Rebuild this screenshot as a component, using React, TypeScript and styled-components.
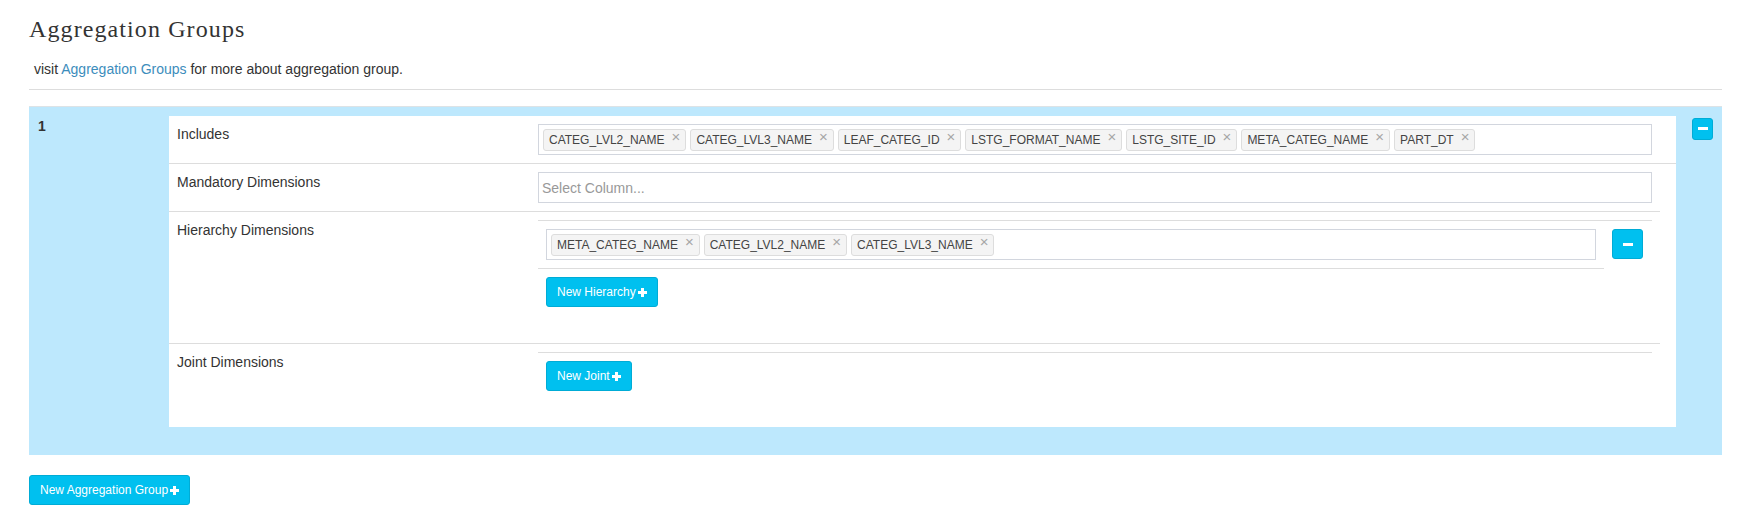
import React from 'react';
import styled, { createGlobalStyle } from 'styled-components';

const GlobalStyle = createGlobalStyle`
  html, body { margin: 0; padding: 0; background: #fff; }
  body {
    font-family: "Liberation Sans", Arial, sans-serif;
    font-size: 14px;
    line-height: 20px;
    color: #333;
  }
  * { box-sizing: border-box; }
`;

const Page = styled.div`
  padding: 0 21px 40px 29px;
`;

const Title = styled.h3`
  margin: 16px 0 0;
  font-family: "Liberation Serif", "Times New Roman", serif;
  font-size: 24px;
  letter-spacing: 1.1px;
  line-height: 26px;
  font-weight: normal;
  color: #333;
`;

const Intro = styled.p`
  margin: 17px 0 0;
  padding-left: 5px;
  font-size: 14px;
  line-height: 20px;
`;

const DocLink = styled.a`
  color: #3c8dbc;
  text-decoration: none;
`;

const Divider = styled.hr`
  margin: 10px 0 0;
  height: 0;
  border: 0;
  border-top: 1px solid #ddd;
`;

const GroupPanel = styled.div`
  margin-top: 16px;
  border-top: 1px solid #dde3e6;
  background: #bde8fd;
  padding: 9px 0 28px;
  display: grid;
  grid-template-columns: 140px 1fr 46px;
  align-items: start;
`;

const GroupIndex = styled.div`
  padding-left: 9px;
  font-weight: bold;
  line-height: 20px;
  color: #333;
`;

const Sheet = styled.div`
  background: #fff;
`;

const GroupSide = styled.div`
  padding-left: 16px;
  margin-top: -1px;
`;

const Row = styled.div<{ $full?: boolean; $last?: boolean }>`
  display: grid;
  grid-template-columns: 361px 1fr;
  margin-right: ${(p) => (p.$full ? '0' : '16px')};
  border-bottom: ${(p) => (p.$last ? '0' : '1px solid #ddd')};
`;

const RowLabel = styled.div`
  padding: 8px;
  line-height: 20px;
  color: #333;
`;

const RowCell = styled.div<{ $full?: boolean }>`
  padding: 8px ${(p) => (p.$full ? '24px' : '8px')} 8px 8px;
  min-width: 0;
`;

const TagBox = styled.div`
  display: flex;
  align-items: center;
  gap: 4px;
  height: 31px;
  padding: 0 4px;
  border: 1px solid #d2d6de;
  background: #fff;
`;

const Placeholder = styled.span`
  margin-left: -1px;
  color: #999;
  font-size: 14px;
`;

const Tag = styled.span`
  display: inline-flex;
  align-items: center;
  height: 22px;
  padding: 0 5px;
  border: 1px solid #ddd;
  border-radius: 3px;
  background: #f4f4f4;
  color: #444;
  font-size: 12px;
  line-height: 18px;
  white-space: nowrap;
`;

const TagClose = styled.span`
  align-self: flex-start;
  margin-left: 7px;
  font-size: 15px;
  line-height: 14px;
  color: #a6a6a6;
`;

const SubTable = styled.div`
  border-top: 1px solid #ddd;
  margin-bottom: 20px;
`;

const HierarchyLine = styled.div`
  display: flex;
  padding-top: 8px;
`;

const HierarchyInputCell = styled.div`
  flex: 1;
  min-width: 0;
  padding: 0 8px 8px;
  border-bottom: 1px solid #ddd;
`;

const HierarchyActionCell = styled.div`
  width: 48px;
  padding: 0 8px;
`;

const ActionRow = styled.div`
  padding: 8px;
`;

const AddButton = styled.button`
  display: inline-flex;
  align-items: center;
  height: 30px;
  padding: 0 10px;
  border: 1px solid #00acd6;
  border-radius: 3px;
  background: #00c0ef;
  color: #fff;
  font-family: "Liberation Sans", Arial, sans-serif;
  font-size: 12px;
  line-height: 18px;
  cursor: pointer;
`;

const RemoveButton = styled.button<{ $size: 'xs' | 'sm' }>`
  display: inline-flex;
  align-items: center;
  justify-content: center;
  width: ${(p) => (p.$size === 'xs' ? '21px' : '31px')};
  height: ${(p) => (p.$size === 'xs' ? '22px' : '30px')};
  padding: 0;
  border: 1px solid #00acd6;
  border-radius: 3px;
  background: #00c0ef;
  cursor: pointer;
`;

const Footer = styled.div`
  margin-top: 20px;
`;

const PlusIcon = () => (
  <svg width="9" height="9" viewBox="0 0 9 9" style={{ marginLeft: 2 }} aria-hidden="true">
    <path d="M3 0h3v3h3v3H6v3H3V6H0V3h3z" fill="#fff" />
  </svg>
);

const MinusIcon = () => (
  <svg width="10" height="3" viewBox="0 0 10 3" aria-hidden="true">
    <rect width="10" height="3" fill="#fff" />
  </svg>
);

const Tags = ({ items }: { items: string[] }) => (
  <TagBox>
    {items.map((t) => (
      <Tag key={t}>
        {t}
        <TagClose>×</TagClose>
      </Tag>
    ))}
  </TagBox>
);

const includes = [
  'CATEG_LVL2_NAME',
  'CATEG_LVL3_NAME',
  'LEAF_CATEG_ID',
  'LSTG_FORMAT_NAME',
  'LSTG_SITE_ID',
  'META_CATEG_NAME',
  'PART_DT',
];

const hierarchy = ['META_CATEG_NAME', 'CATEG_LVL2_NAME', 'CATEG_LVL3_NAME'];

export default function App() {
  return (
    <>
      <GlobalStyle />
      <Page>
        <Title>Aggregation Groups</Title>
        <Intro>
          visit <DocLink href="#">Aggregation Groups</DocLink> for more about aggregation group.
        </Intro>
        <Divider />
        <GroupPanel>
          <GroupIndex>1</GroupIndex>
          <Sheet>
            <Row $full>
              <RowLabel>Includes</RowLabel>
              <RowCell $full>
                <Tags items={includes} />
              </RowCell>
            </Row>
            <Row>
              <RowLabel>Mandatory Dimensions</RowLabel>
              <RowCell>
                <TagBox>
                  <Placeholder>Select Column...</Placeholder>
                </TagBox>
              </RowCell>
            </Row>
            <Row>
              <RowLabel>Hierarchy Dimensions</RowLabel>
              <RowCell>
                <SubTable>
                  <HierarchyLine>
                    <HierarchyInputCell>
                      <Tags items={hierarchy} />
                    </HierarchyInputCell>
                    <HierarchyActionCell>
                      <RemoveButton $size="sm">
                        <MinusIcon />
                      </RemoveButton>
                    </HierarchyActionCell>
                  </HierarchyLine>
                  <ActionRow>
                    <AddButton>
                      New Hierarchy
                      <PlusIcon />
                    </AddButton>
                  </ActionRow>
                </SubTable>
              </RowCell>
            </Row>
            <Row $last>
              <RowLabel>Joint Dimensions</RowLabel>
              <RowCell>
                <SubTable>
                  <ActionRow>
                    <AddButton>
                      New Joint
                      <PlusIcon />
                    </AddButton>
                  </ActionRow>
                </SubTable>
              </RowCell>
            </Row>
          </Sheet>
          <GroupSide>
            <RemoveButton $size="xs">
              <MinusIcon />
            </RemoveButton>
          </GroupSide>
        </GroupPanel>
        <Footer>
          <AddButton>
            New Aggregation Group
            <PlusIcon />
          </AddButton>
        </Footer>
      </Page>
    </>
  );
}
